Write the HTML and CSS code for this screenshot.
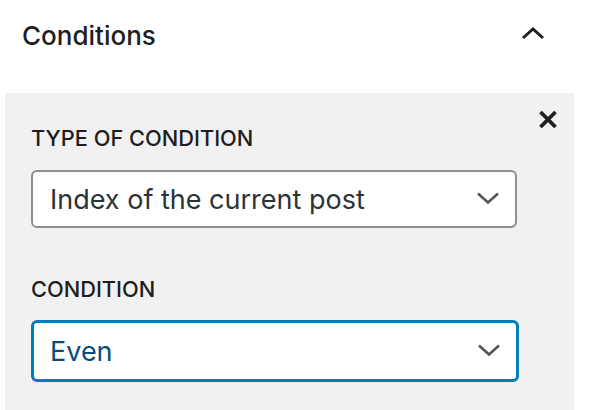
FILE: index.html
```html
<!DOCTYPE html>
<html>
<head>
<meta charset="utf-8">
<link rel="stylesheet" href="styles.css">
</head>
<body>
<div class="panel">
  <div class="panel-header">
    <span class="panel-title">Conditions</span>
    <svg class="toggle" width="24" height="14" viewBox="0 0 24 14"><path d="M2 12L12 3l10 9" fill="none" stroke="#1e1e1e" stroke-width="3"/></svg>
  </div>
  <div class="condition-box">
    <button class="remove" aria-label="Remove">
      <svg width="20" height="20" viewBox="0 0 20 20"><path d="M2.5 2L17.5 17M17.5 2L2.5 17" stroke="#1e1e1e" stroke-width="3.8"/></svg>
    </button>
    <div class="field">
      <label class="field-label">Type of condition</label>
      <div class="select">
        <span class="select-value">Index of the current post</span>
        <svg class="chev" width="24" height="24" viewBox="0 0 24 24"><path d="M2 6.5l10 9 10-9" fill="none" stroke="#555" stroke-width="2.6"/></svg>
      </div>
    </div>
    <div class="field">
      <label class="field-label">Condition</label>
      <div class="select focused">
        <span class="select-value">Even</span>
        <svg class="chev" width="24" height="24" viewBox="0 0 24 24"><path d="M2 6.5l10 9 10-9" fill="none" stroke="#555" stroke-width="2.6"/></svg>
      </div>
    </div>
  </div>
</div>
</body>
</html>
```
FILE: styles.css
```css
html, body { margin: 0; padding: 0; background: #fff; }
body { font-family: Inter, Roboto, "Noto Sans", sans-serif; color: #1e1e1e; width: 590px; height: 410px; overflow: hidden; }
.panel { padding: 0 16px 0 5px; }
.panel-header { display: flex; align-items: center; justify-content: space-between; height: 76px; padding-left: 17px; padding-right: 0; }
.panel-title { font-size: 26px; font-weight: 500; line-height: 30px; margin-top: -4px; }
.toggle { margin-right: 29px; margin-top: -10px; }
.condition-box { position: relative; background: #f1f1f1; margin-top: 17px; padding: 32px 57px 28px 26px; }
.remove { position: absolute; top: 16px; right: 15px; background: none; border: 0; padding: 0; width: 22px; height: 22px; }
.remove svg { display: block; width: 20px; height: 20px; margin: 1px; }
.field { display: flex; flex-direction: column; }
.field + .field { margin-top: 48px; }
.field-label { font-size: 21.8px; font-weight: 500; text-transform: uppercase; line-height: 26px; margin-bottom: 18px; }
.field:first-child .field-label, .remove + .field .field-label { margin-bottom: 19px; }
.select { display: flex; align-items: center; justify-content: space-between; height: 58px; box-sizing: border-box; background: #fff; border: 2px solid #8c8f94; border-radius: 6px; padding: 0 15px 0 17px; }
.select.focused { border: 3px solid #007cba; height: 62px; padding-left: 16px; margin-right: -2px; }
.select-value { font-size: 27px; color: #2c3338; }
.select.focused .select-value { color: #0a4b78; }
.chev { width: 24px; height: 24px; }
```
